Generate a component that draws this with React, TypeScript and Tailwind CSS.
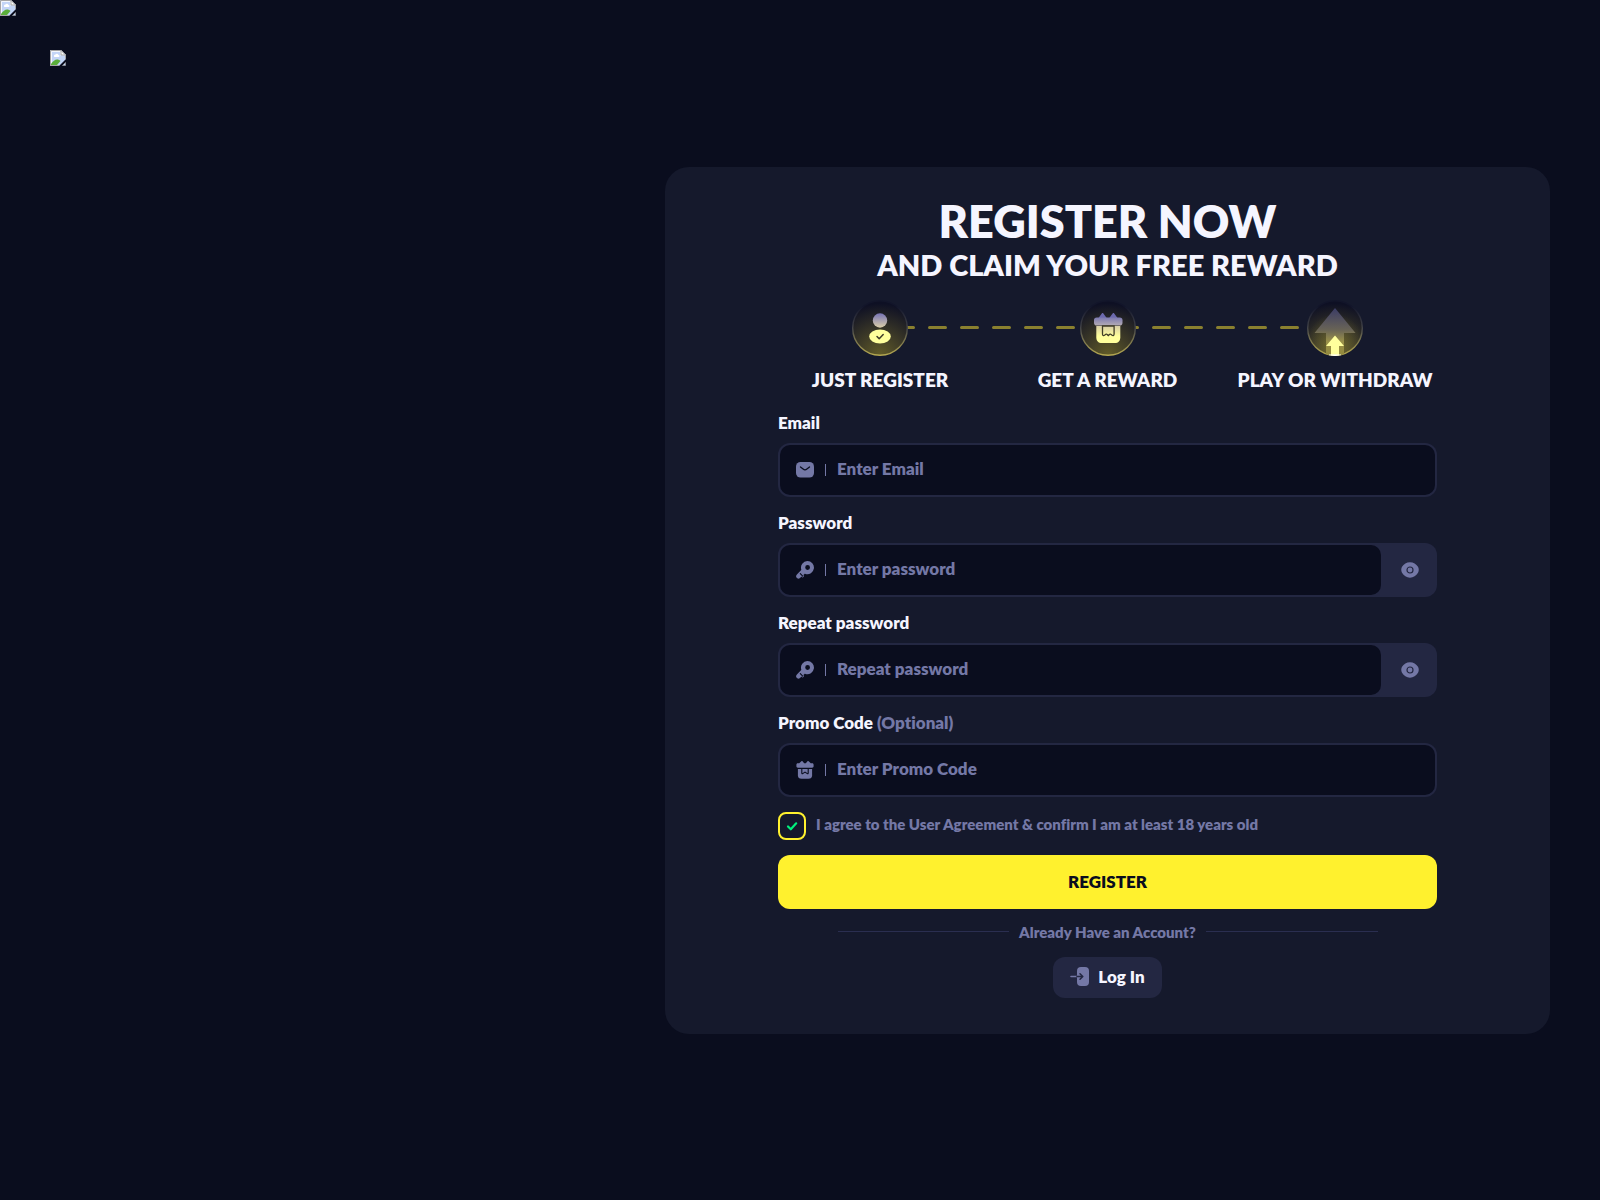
import { useId, useState } from 'react';
import type { ReactNode } from 'react';

function MissingImage() {
  return (
    <svg width="16" height="16" viewBox="0 0 16 16" role="img" aria-label="Missing image">
      <path d="M0 0h11l5 5v4l-7 7H0z" fill="#c3d5f7" />
      <path d="M1.500 15V1.500h9V5H15" fill="none" stroke="#f4f7fd" />
      <path d="M4 6.500a1.500 1.500 0 0 1 1.500-2 1.600 1.600 0 0 1 3 .5 1 1 0 0 1 0 2H4.500z" fill="#fff" />
      <path d="M1 14c2-3 4-4.500 6-4.500 1.500 0 2.500.5 3.500 1.500L7 15H1z" fill="#5bae3a" />
      <path d="M.5 16V.5H11L15.500 5v4M0 15.500h9" fill="none" stroke="#a5a5a5" />
      <path d="M11 .500V5h4.500z" fill="#fff" stroke="#a5a5a5" />
      <path d="M12.500 15.500l3-3v3z" fill="#c3d5f7" stroke="#a5a5a5" strokeWidth=".6" />
    </svg>
  );
}

function MailIcon() {
  return (
    <svg width="18" height="18" viewBox="0 0 18 18" className="shrink-0">
      <rect x="0" y="1" width="18" height="15.500" rx="4.500" fill="#7478a6" />
      <path d="M4.500 6l2.600 2.100c1.100.9 2.700.9 3.800 0L13.500 6" fill="none" stroke="#0a0d1e" strokeWidth="1.300" strokeLinecap="round" />
    </svg>
  );
}

function KeyIcon() {
  return (
    <svg width="18" height="18" viewBox="0 0 18 18" className="shrink-0">
      <path
        fillRule="evenodd"
        fill="#7478a6"
        d="M11.300 0a6.600 6.600 0 1 1-1.900 12.900c-.4-.1-.8 0-1.100.3l-.9.9.3.500c.3.500.2 1-.2 1.300l-.5.400c-.4.300-.9.200-1.200-.2l-.4-.5-.6.700c-1.200 1.600-2.700 1.700-3.800.8-1.300-1.100-1.200-2.600-.1-3.700L5 9.300c.3-.3.300-.6.200-1A6.600 6.600 0 0 1 11.300 0zm.3 4.100a2.400 2.400 0 1 0 0 4.800 2.400 2.400 0 0 0 0-4.800z"
      />
      <path d="M4.300 12.700l2.400 2.500" stroke="#0a0d1e" strokeWidth="1.100" strokeLinecap="round" />
    </svg>
  );
}

function GiftIcon() {
  return (
    <svg width="18" height="18" viewBox="0 0 18 18" className="shrink-0">
      <path d="M3.200 2.200 5.400.300c.4-.3.800-.3 1.100 0l1.700 1.900h1.600L11.500.300c.3-.3.700-.3 1.100 0l2.200 1.900h1.400c1 0 1.400.600 1.400 1.500v1.600c0 .900-.5 1.400-1.400 1.400H1.800C.9 6.700.4 6.200.4 5.300V3.700c0-.9.400-1.500 1.400-1.500z" fill="#7478a6" />
      <path d="M1.900 8h14.200v6.200c0 2.300-1.300 3.600-3.600 3.600h-7c-2.300 0-3.600-1.300-3.600-3.600z" fill="#7478a6" />
      <path d="M5.800 8v4.100c0 .6.500.8.900.5l2.300-1.500 2.300 1.500c.4.300.9.100.9-.5V8" fill="none" stroke="#0a0d1e" strokeWidth="1.100" />
    </svg>
  );
}

function EyeIcon() {
  return (
    <svg width="18" height="18" viewBox="0 0 18 18">
      <path d="M9 1.200c3.500 0 6.200 1.800 8 4.600 1 1.700 1 4.300 0 6-1.800 2.800-4.500 4.900-8 4.900s-6.200-2.100-8-4.900c-1-1.700-1-4.300 0-6 1.800-2.800 4.500-4.600 8-4.600z" fill="#7478a6" />
      <circle cx="9" cy="9" r="3" fill="none" stroke="#232742" strokeWidth="1.200" />
    </svg>
  );
}

function LoginIcon() {
  return (
    <svg width="20" height="20" viewBox="0 0 20 20">
      <rect x="7" y="0" width="12" height="19" rx="4" fill="#7478a6" />
      <path d="M1 9.500h6" stroke="#7478a6" strokeWidth="1.600" strokeLinecap="round" />
      <path d="M7 9.500h5.500M10 6.700l2.800 2.800-2.800 2.800" fill="none" stroke="#232742" strokeWidth="1.500" strokeLinecap="round" strokeLinejoin="round" />
    </svg>
  );
}

// shared gradients for the three step badges
function BadgeDefs() {
  return (
    <svg width="0" height="0" className="absolute">
      <defs>
        <radialGradient id="badge-fill" cx=".5" cy="1" r=".95">
          <stop offset="0" stopColor="#625c28" />
          <stop offset=".45" stopColor="#3d3a27" />
          <stop offset="1" stopColor="#0e1024" />
        </radialGradient>
        <linearGradient id="badge-ring" x1="0" y1="0" x2="0" y2="1">
          <stop offset=".1" stopColor="#12152a" />
          <stop offset=".5" stopColor="#45464a" />
          <stop offset="1" stopColor="#b5a850" />
        </linearGradient>
        <linearGradient id="badge-lilac" x1="0" y1="0" x2="0" y2="1">
          <stop offset="0" stopColor="#7673b4" />
          <stop offset="1" stopColor="#dccfa8" />
        </linearGradient>
        <linearGradient id="badge-lid" x1="0" y1="0" x2="0" y2="1">
          <stop offset="0" stopColor="#7c79b0" />
          <stop offset="1" stopColor="#b3abb4" />
        </linearGradient>
        <linearGradient id="badge-box" x1="0" y1="0" x2="0" y2="1">
          <stop offset="0" stopColor="#d8cea6" />
          <stop offset=".6" stopColor="#ffff9c" />
        </linearGradient>
        <linearGradient id="badge-arrow" x1="0" y1="0" x2="0" y2="1">
          <stop offset="0" stopColor="#3b3c66" />
          <stop offset=".45" stopColor="#686356" />
          <stop offset=".7" stopColor="#999049" />
          <stop offset="1" stopColor="#938a3e" />
        </linearGradient>
        <radialGradient id="badge-glow" cx=".5" cy=".75" r=".5">
          <stop offset="0" stopColor="#b0a53c" stopOpacity=".35" />
          <stop offset="1" stopColor="#b0a53c" stopOpacity="0" />
        </radialGradient>
        <clipPath id="badge-clip">
          <circle cx="28" cy="28" r="28" />
        </clipPath>
      </defs>
    </svg>
  );
}

function StepBadge({ children }: { children: ReactNode }) {
  return (
    <svg width="56" height="56" viewBox="0 0 56 56" className="relative">
      <circle cx="28" cy="28" r="27.300" fill="url(#badge-fill)" stroke="url(#badge-ring)" strokeWidth="1.400" />
      {children}
    </svg>
  );
}

function PersonArt() {
  return (
    <>
      <circle cx="28" cy="20.500" r="7.200" fill="url(#badge-lilac)" />
      <ellipse cx="28" cy="36.500" rx="10.800" ry="7" fill="#ffff9c" />
      <path d="M25 36.500l2.200 2.300 4-4.300" fill="none" stroke="#403d27" strokeWidth="1.500" strokeLinecap="round" strokeLinejoin="round" />
    </>
  );
}

function GiftArt() {
  return (
    <>
      <path d="M18.500 18l3.300-4.600c.4-.6 1.100-.6 1.600 0l3.300 4.600zM29.300 18l3.300-4.600c.5-.6 1.200-.6 1.600 0l3.300 4.600z" fill="#6c69ac" />
      <rect x="14" y="17.500" width="28.500" height="8" rx="2.800" fill="url(#badge-lid)" />
      <path d="M16.300 26h24v11.200c0 3.800-2 5.800-5.500 5.800h-13c-3.500 0-5.500-2-5.500-5.800z" fill="url(#badge-box)" />
      <path d="M22.500 26v8c0 1.500 1 2 2 1.300l1.300-1c.4-.3.800-.3 1.100 0l1.400 1.300 1.400-1.300c.4-.3.800-.3 1.100 0l1.300 1c1 .700 2 .2 2-1.300v-8z" fill="none" stroke="#403d27" strokeWidth="1.300" />
    </>
  );
}

function ArrowArt() {
  return (
    <g clipPath="url(#badge-clip)">
      <circle cx="28" cy="28" r="28" fill="url(#badge-glow)" />
      <path d="M28 8l20.500 25H37v23H19V33H7.500z" fill="url(#badge-arrow)" />
      <path d="M28 35.500l9 10.500h-5v10h-8V46h-5z" fill="#ffff9c" />
      <path d="M22 54.500h12V56H22z" fill="#fff" />
    </g>
  );
}

const steps = [
  { label: 'JUST REGISTER', art: <PersonArt /> },
  { label: 'GET A REWARD', art: <GiftArt /> },
  { label: 'PLAY OR WITHDRAW', art: <ArrowArt /> },
];

function Steps() {
  return (
    <div className="relative mt-[18px] flex w-full justify-between px-[7px]">
      <BadgeDefs />
      <svg className="absolute left-[118px] top-[26px] w-[404px]" height="3" viewBox="0 0 404 3">
        <path d="M1.500 1.500H403" stroke="#8a802f" strokeWidth="3" strokeLinecap="round" strokeDasharray="16 16" />
      </svg>
      {steps.map((step) => (
        <div key={step.label} className="flex w-[190px] flex-col items-center gap-3">
          <StepBadge>{step.art}</StepBadge>
          <span className="whitespace-nowrap text-[19px] font-extrabold leading-6">{step.label}</span>
        </div>
      ))}
    </div>
  );
}

type FieldProps = {
  label: string;
  optional?: boolean;
  placeholder: string;
  icon: ReactNode;
  type?: string;
};

function Field({ label, optional, placeholder, icon, type = 'text' }: FieldProps) {
  const id = useId();
  const [visible, setVisible] = useState(false);
  const isPassword = type === 'password';

  return (
    <div className="flex flex-col gap-[10px]">
      <label htmlFor={id} className="text-[17px] font-extrabold leading-5">
        {label}
        {optional && <span className="text-[#7478a6]"> (Optional)</span>}
      </label>
      <div className="flex h-[54px] rounded-xl bg-[#232742] p-[2px]">
        <div className="flex min-w-0 flex-1 items-center gap-[11px] rounded-[10px] bg-[#0a0d1e] pl-4 pr-3">
          {icon}
          <span className="h-3 w-px shrink-0 bg-[#7478a6]" />
          <input
            id={id}
            type={isPassword && visible ? 'text' : type}
            placeholder={placeholder}
            className="h-full min-w-0 flex-1 bg-transparent pb-[2px] text-[17px] font-extrabold outline-none placeholder:text-[#7478a6]"
          />
        </div>
        {isPassword && (
          <button
            type="button"
            aria-label={visible ? 'Hide password' : 'Show password'}
            onClick={() => setVisible(!visible)}
            className="flex w-[54px] items-center justify-center pl-1"
          >
            <EyeIcon />
          </button>
        )}
      </div>
    </div>
  );
}

export default function App() {
  const [agreed, setAgreed] = useState(true);

  return (
    <div className="relative flex min-h-screen items-center justify-end bg-[#0a0d1e] px-[50px] font-['Lato',sans-serif] text-[#f5f5ff] [font-variant-ligatures:none]">
      <div className="absolute left-0 top-0">
        <MissingImage />
      </div>
      <a href="#" className="absolute left-[50px] top-[50px]">
        <MissingImage />
      </a>

      <main className="flex w-[59%] flex-col items-center rounded-3xl bg-[#15192c] px-[113px] pb-9 pt-7">
        <h1 className="flex flex-col items-center whitespace-nowrap">
          <span className="text-[45px] font-extrabold leading-[52px]">REGISTER NOW</span>
          <span className="text-[29px] font-extrabold leading-[35px]">AND CLAIM YOUR FREE REWARD</span>
        </h1>

        <Steps />

        <form className="mt-[21px] flex w-full flex-col" onSubmit={(e) => e.preventDefault()}>
          <div className="flex flex-col gap-4">
            <Field label="Email" type="email" placeholder="Enter Email" icon={<MailIcon />} />
            <Field label="Password" type="password" placeholder="Enter password" icon={<KeyIcon />} />
            <Field label="Repeat password" type="password" placeholder="Repeat password" icon={<KeyIcon />} />
            <Field label="Promo Code" optional placeholder="Enter Promo Code" icon={<GiftIcon />} />
          </div>

          <label className="mt-[15px] flex gap-[10px] text-[15px] font-extrabold leading-6 text-[#7478a6]">
            <span className="relative flex size-7">
              <input
                type="checkbox"
                checked={agreed}
                onChange={(e) => setAgreed(e.target.checked)}
                className="size-7 appearance-none rounded-lg border-2 border-[#fff12e]"
              />
              {agreed && (
                <svg className="pointer-events-none absolute inset-0" width="28" height="28" viewBox="0 0 28 28">
                  <path d="M10 14.500l2.800 2.800 5.400-6" fill="none" stroke="#00f07c" strokeWidth="2.200" strokeLinecap="round" strokeLinejoin="round" />
                </svg>
              )}
            </span>
            I agree to the User Agreement &amp; confirm I am at least 18 years old
          </label>

          <button type="submit" className="mt-[15px] h-[54px] rounded-xl bg-[#fff12e] text-[17px] font-extrabold text-[#0a0d1e]">
            REGISTER
          </button>
        </form>

        <div className="mt-[13px] flex w-[540px] items-center gap-[10px] text-[15px] font-extrabold leading-5 text-[#7478a6]">
          <span className="h-px flex-1 bg-[#2a2e50]" />
          Already Have an Account?
          <span className="h-px flex-1 bg-[#2a2e50]" />
        </div>

        <button type="button" className="mt-[15px] flex h-[41px] items-center gap-2 rounded-xl bg-[#232742] px-[17px] text-[17px] font-extrabold">
          <LoginIcon />
          Log In
        </button>
      </main>
    </div>
  );
}
